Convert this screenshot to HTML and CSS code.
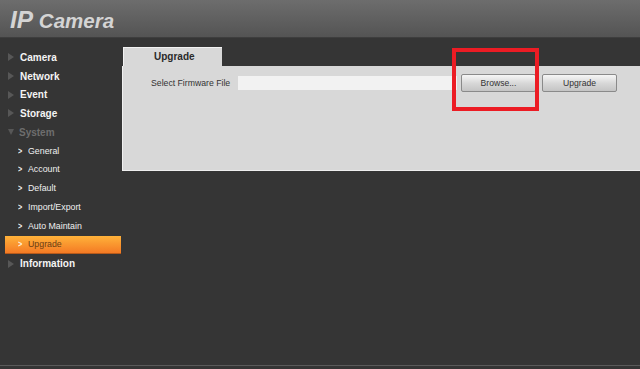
FILE: index.html
```html
<!DOCTYPE html>
<html lang="en">
<head>
    <meta charset="UTF-8">
    <title>IP Camera</title>
    <link rel="stylesheet" href="styles.css">
</head>
<body>
    <div class="header">
        <span class="logo"><span class="logo-ip">IP</span> Camera</span>
    </div>

    <div class="main">
        <ul class="menu">
            <li class="menu-item"><span class="arrow"></span>Camera</li>
            <li class="menu-item"><span class="arrow"></span>Network</li>
            <li class="menu-item"><span class="arrow"></span>Event</li>
            <li class="menu-item"><span class="arrow"></span>Storage</li>
            <li class="menu-item open"><span class="arrow down"></span>System</li>
            <li class="sub-item"><span class="chev">&gt;</span>General</li>
            <li class="sub-item"><span class="chev">&gt;</span>Account</li>
            <li class="sub-item"><span class="chev">&gt;</span>Default</li>
            <li class="sub-item"><span class="chev">&gt;</span>Import/Export</li>
            <li class="sub-item"><span class="chev">&gt;</span>Auto Maintain</li>
            <li class="sub-item active"><span class="chev">&gt;</span>Upgrade</li>
            <li class="menu-item"><span class="arrow"></span>Information</li>
        </ul>

        <div class="content">
            <div class="tabs">
                <div class="tab">Upgrade</div>
            </div>
            <div class="panel">
                <div class="form-row">
                    <label class="label">Select Firmware File</label>
                    <div class="file-input"></div>
                    <button class="btn">Browse...</button>
                    <button class="btn">Upgrade</button>
                </div>
            </div>
            <!-- annotation box around the browse button -->
            <div class="highlight-box"></div>
        </div>
    </div>
</body>
</html>
```

FILE: styles.css
```css
html, body {
    margin: 0;
    padding: 0;
}
body {
    font-family: "Liberation Sans", Arial, sans-serif;
    background: #353535;
    width: 640px;
    height: 369px;
    overflow: hidden;
    position: relative;
}
body::after {
    content: "";
    position: absolute;
    left: 0;
    right: 0;
    bottom: 3px;
    height: 1px;
    background: #5a5a5a;
}
.header {
    height: 37px;
    background: linear-gradient(#6d6d6d, #545454);
    border-bottom: 1px solid #3e3e3e;
    display: flex;
    align-items: center;
    padding-left: 10px;
}
.logo {
    font-weight: bold;
    font-style: italic;
    font-size: 20.5px;
    color: #d4d4d4;
    margin-top: 3px;
}
.logo-ip {
    font-size: 24.5px;
}
.main {
    display: flex;
}
.menu {
    list-style: none;
    margin: 0;
    padding: 10px 0 0 0;
    width: 122px;
    flex-shrink: 0;
}
.menu li {
    height: 18.7px;
    display: flex;
    align-items: center;
}
.menu-item {
    font-weight: bold;
    font-size: 10px;
    color: #f4f4f4;
    padding-left: 8px;
}
.menu-item.open {
    color: #6e6e6e;
}
.arrow {
    width: 0;
    height: 0;
    border-top: 4px solid transparent;
    border-bottom: 4px solid transparent;
    border-left: 6px solid #575757;
    margin-right: 6px;
}
.arrow.down {
    border-left: 3.5px solid transparent;
    border-right: 3.5px solid transparent;
    border-top: 6px solid #575757;
    border-bottom: 0;
    margin-right: 5px;
}
.sub-item {
    font-size: 8.8px;
    color: #f0f0f0;
    padding-left: 17px;
}
.chev {
    font-weight: bold;
    font-size: 9px;
    width: 11px;
    transform: scaleX(0.8);
}
.sub-item.active {
    margin-left: 5px;
    padding-left: 12px;
    height: 17px;
    margin-top: 1px;
    margin-bottom: 0.7px;
    background: linear-gradient(#ffb23a, #f47a24);
    border-bottom: 1px solid #b85a1a;
    color: #6a3d14;
    width: 104px;
}
.sub-item.active .chev {
    color: #fff4e0;
}
.content {
    flex: 1;
    padding-top: 9px;
    position: relative;
}
.tabs {
    display: flex;
}
.tab {
    width: 99px;
    height: 19px;
    background: #d8d8d8;
    border-top: 1px solid #f2f2f2;
    border-left: 1px solid #f2f2f2;
    margin-left: 1px;
    box-sizing: border-box;
    font-weight: bold;
    font-size: 10px;
    color: #2a2a2a;
    padding: 3px 0 0 30px;
}
.panel {
    height: 105px;
    background: #d8d8d8;
    border-left: 1px solid #f0f0f0;
    border-bottom: 1px solid #eeeeee;
    box-sizing: border-box;
}
.form-row {
    display: flex;
    align-items: center;
    padding: 8px 0 0 28px;
}
.label {
    font-size: 8.7px;
    color: #333;
    width: 87px;
}
.file-input {
    width: 219px;
    height: 14px;
    background: #f2f2f2;
    margin-right: 4px;
}
.btn {
    width: 75px;
    height: 18px;
    margin: 0 6px 0 0;
    padding: 0;
    font-family: "Liberation Sans", Arial, sans-serif;
    font-size: 8.6px;
    color: #333;
    background: linear-gradient(#f6f6f6, #d6d6d6 55%, #c4c4c4);
    border: 1px solid #8a8a8a;
    border-radius: 2px;
}
.highlight-box {
    position: absolute;
    left: 330px;
    top: 10px;
    width: 79px;
    height: 55px;
    border: 4px solid #ec1c24;
}
```
